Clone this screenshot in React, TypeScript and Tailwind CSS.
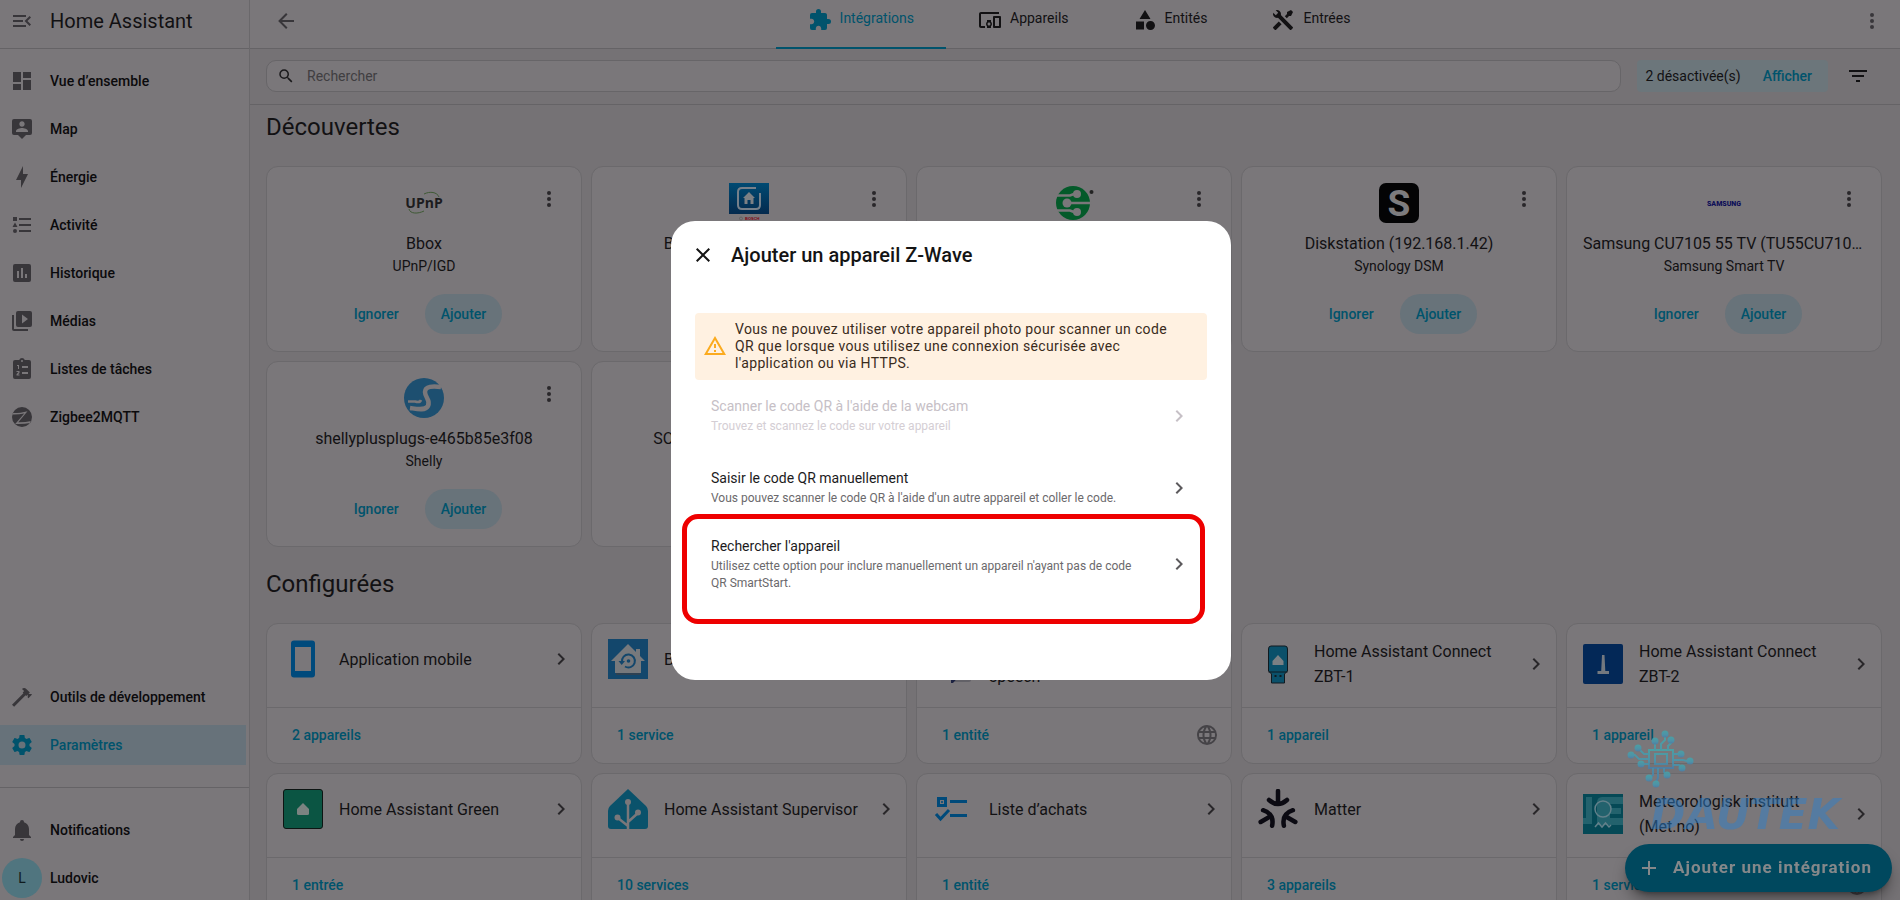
import type { ReactNode } from "react";

const PATHS = {
  menuOpen:
    "M21,15.61L19.59,17L14.58,12L19.59,7L21,8.39L17.44,12L21,15.61M3,6H16V8H3V6M3,13V11H13V13H3M3,18V16H16V18H3Z",
  dashboard: "M13,3V9H21V3M13,21H21V11H13M3,21H11V15H3M3,13H11V3H3V13Z",
  map: "M20,2H4A2,2 0 0,0 2,4V16A2,2 0 0,0 4,18H8L12,22L16,18H20A2,2 0 0,0 22,16V4A2,2 0 0,0 20,2M12,4.3C13.5,4.3 14.7,5.5 14.7,7C14.7,8.5 13.5,9.7 12,9.7C10.5,9.7 9.3,8.5 9.3,7C9.3,5.5 10.5,4.3 12,4.3M18,15H6V14.1C6,12.1 10,11 12,11C14,11 18,12.1 18,14.1V15Z",
  bolt: "M11 15H6L13 1V9H18L11 23V15Z",
  activity:
    "M5,9.5L7.5,14H2.5L5,9.5M3,4H7V8H3V4M5,20A2,2 0 0,0 7,18A2,2 0 0,0 5,16A2,2 0 0,0 3,18A2,2 0 0,0 5,20M9,5V7H21V5H9M9,19H21V17H9V19M9,13H21V11H9V13Z",
  history:
    "M9 17H7V10H9V17M13 17H11V7H13V17M17 17H15V13H17V17M19 3H5A2 2 0 0 0 3 5V19A2 2 0 0 0 5 21H19A2 2 0 0 0 21 19V5A2 2 0 0 0 19 3Z",
  media:
    "M4,6H2V20A2,2 0 0,0 4,22H18V20H4V6M20,2H8A2,2 0 0,0 6,4V16A2,2 0 0,0 8,18H20A2,2 0 0,0 22,16V4A2,2 0 0,0 20,2M12,14.5V5.5L18,10L12,14.5Z",
  todo: "M19 3H14.8A3 3 0 0 0 9.2 3H5A2 2 0 0 0 3 5V20A2 2 0 0 0 5 22H19A2 2 0 0 0 21 20V5A2 2 0 0 0 19 3M12 3A1 1 0 1 1 12 5A1 1 0 1 1 12 3M7 8H9V12H8V9H7V8M6.5 14H9.5V16L8 17.5H9.5V18.5H6.5V17.2L8.3 15.2V15H6.5V14M12 9H18V11H12V9M12 15H18V17H12V15Z",
  zigbee:
    "M12 2A10 10 0 1 0 12 22A10 10 0 1 0 12 2M3.200 8C8 8 13 7.500 17.500 6.200L8.300 17.300C12.500 17.400 17 17 21.300 16L20.300 18C15.500 19 10.500 19.300 5.200 19L14.300 8.600C10.500 9.300 6.500 9.600 2.600 9.500Z",
  hammer:
    "M2,19.63L13.43,8.2L12.72,7.5L14.14,6.07L12,3.89C13.2,2.7 15.09,2.7 16.27,3.89L19.87,7.5L18.45,8.91H21.29L22,9.62L18.45,13.21L17.74,12.5V9.62L16.27,11.04L15.56,10.33L4.13,21.76L2,19.63Z",
  cog: "M12,15.5A3.5,3.5 0 0,1 8.5,12A3.5,3.5 0 0,1 12,8.5A3.5,3.5 0 0,1 15.5,12A3.5,3.5 0 0,1 12,15.5M19.43,12.97C19.47,12.65 19.5,12.33 19.5,12C19.5,11.67 19.47,11.34 19.43,11L21.54,9.37C21.73,9.22 21.78,8.95 21.66,8.73L19.66,5.27C19.54,5.05 19.27,4.96 19.05,5.05L16.56,6.05C16.04,5.66 15.5,5.32 14.87,5.07L14.5,2.42C14.46,2.18 14.25,2 14,2H10C9.75,2 9.54,2.18 9.5,2.42L9.13,5.07C8.5,5.32 7.96,5.66 7.44,6.05L4.95,5.05C4.73,4.96 4.46,5.05 4.34,5.27L2.34,8.73C2.21,8.95 2.27,9.22 2.46,9.37L4.57,11C4.53,11.34 4.5,11.67 4.5,12C4.5,12.33 4.53,12.65 4.57,12.97L2.46,14.63C2.27,14.78 2.21,15.05 2.34,15.27L4.34,18.73C4.46,18.95 4.73,19.03 4.95,18.95L7.44,17.94C7.96,18.34 8.5,18.68 9.13,18.93L9.5,21.58C9.54,21.82 9.75,22 10,22H14C14.25,22 14.46,21.82 14.5,21.58L14.87,18.93C15.5,18.67 16.04,18.34 16.56,17.94L19.05,18.95C19.27,19.03 19.54,18.95 19.66,18.73L21.66,15.27C21.78,15.05 21.73,14.78 21.54,14.63L19.43,12.97Z",
  bell: "M21,19V20H3V19L5,17V11C5,7.9 7.03,5.17 10,4.29C10,4.19 10,4.1 10,4A2,2 0 0,1 12,2A2,2 0 0,1 14,4C14,4.1 14,4.19 14,4.29C16.97,5.17 19,7.9 19,11V17L21,19M14,21A2,2 0 0,1 12,23A2,2 0 0,1 10,21",
  puzzle:
    "M20.5,11H19V7C19,5.89 18.1,5 17,5H13V3.5A2.5,2.5 0 0,0 10.5,1A2.5,2.5 0 0,0 8,3.5V5H4A2,2 0 0,0 2,7V10.8H3.5C5,10.8 6.2,12 6.2,13.5C6.2,15 5,16.2 3.5,16.2H2V20A2,2 0 0,0 4,22H7.8V20.5C7.8,19 9,17.8 10.5,17.8C12,17.8 13.2,19 13.2,20.5V22H17A2,2 0 0,0 19,20V16H20.5A2.5,2.5 0 0,0 23,13.5A2.5,2.5 0 0,0 20.5,11Z",
  devices:
    "M3 6H21V4H3C1.9 4 1 4.9 1 6V18C1 19.1 1.9 20 3 20H7V18H3V6M13 12H9V13.78C8.39 14.33 8 15.11 8 16C8 16.89 8.39 17.67 9 18.22V20H13V18.22C13.61 17.67 14 16.88 14 16S13.61 14.33 13 13.78V12M11 17.5C10.17 17.5 9.5 16.83 9.5 16S10.17 14.5 11 14.5 12.5 15.17 12.5 16 11.83 17.5 11 17.5M22 8H16C15.5 8 15 8.5 15 9V19C15 19.5 15.5 20 16 20H22C22.5 20 23 19.5 23 19V9C23 8.5 22.5 8 22 8M21 18H17V10H21V18Z",
  shape:
    "M11,13.5V21.5H3V13.5H11M12,2L17.5,11H6.5L12,2M17.5,13C20,13 22,15 22,17.5C22,20 20,22 17.5,22C15,22 13,20 13,17.5C13,15 15,13 17.5,13Z",
  tools:
    "M21.71 20.29L20.29 21.71A1 1 0 0 1 18.88 21.71L7 9.85A3.81 3.81 0 0 1 6 10A4 4 0 0 1 2.22 4.7L4.76 7.24L5.29 6.71L6.71 5.29L7.24 4.76L4.7 2.22A4 4 0 0 1 10 6A3.81 3.81 0 0 1 9.85 7L21.71 18.88A1 1 0 0 1 21.71 20.29M2.29 18.88A1 1 0 0 0 2.29 20.29L3.71 21.71A1 1 0 0 0 5.12 21.71L10.59 16.25L7.76 13.42M20 2L16 4V6L13.83 8.17L15.83 10.17L18 8H20L22 4Z",
  chevron: "M8.59,16.58L13.17,12L8.59,7.41L10,6L16,12L10,18L8.59,16.58Z",
  dots: "M12,16A2,2 0 0,1 14,18A2,2 0 0,1 12,20A2,2 0 0,1 10,18A2,2 0 0,1 12,16M12,10A2,2 0 0,1 14,12A2,2 0 0,1 12,14A2,2 0 0,1 10,12A2,2 0 0,1 12,10M12,4A2,2 0 0,1 14,6A2,2 0 0,1 12,8A2,2 0 0,1 10,6A2,2 0 0,1 12,4Z",
  back: "M20,11V13H8L13.5,18.5L12.08,19.92L4.16,12L12.08,4.08L13.5,5.5L8,11H20Z",
  search:
    "M9.5,3A6.5,6.5 0 0,1 16,9.5C16,11.11 15.41,12.59 14.44,13.73L14.71,14H15.5L20.5,19L19,20.5L14,15.5V14.71L13.73,14.44C12.59,15.41 11.11,16 9.5,16A6.5,6.5 0 0,1 3,9.5A6.5,6.5 0 0,1 9.5,3M9.5,5C7,5 5,7 5,9.5C5,12 7,14 9.5,14C12,14 14,12 14,9.5C14,7 12,5 9.5,5Z",
  filter: "M6,13H18V11H6M3,6V8H21V6M10,18H14V16H10V18Z",
  close:
    "M19,6.41L17.59,5L12,10.59L6.41,5L5,6.41L10.59,12L5,17.59L6.41,19L12,13.41L17.59,19L19,17.59L13.41,12L19,6.41Z",
  alert: "M12,2L1,21H23M12,6L19.53,19H4.47M11,10V14H13V10M11,16V18H13V16",
  web: "M16.36,14C16.44,13.34 16.5,12.68 16.5,12C16.5,11.32 16.44,10.66 16.36,10H19.74C19.9,10.64 20,11.31 20,12C20,12.69 19.9,13.36 19.74,14M14.59,19.56C15.19,18.45 15.65,17.25 15.97,16H18.92C17.96,17.65 16.43,18.93 14.59,19.56M14.34,14H9.66C9.56,13.34 9.5,12.68 9.5,12C9.5,11.32 9.56,10.65 9.66,10H14.34C14.43,10.65 14.5,11.32 14.5,12C14.5,12.68 14.43,13.34 14.34,14M12,19.96C11.17,18.76 10.5,17.43 10.09,16H13.91C13.5,17.43 12.83,18.76 12,19.96M8,8H5.08C6.03,6.34 7.57,5.06 9.4,4.44C8.8,5.55 8.35,6.75 8,8M5.08,16H8C8.35,17.25 8.8,18.45 9.4,19.56C7.57,18.93 6.03,17.65 5.08,16M4.26,14C4.1,13.36 4,12.69 4,12C4,11.31 4.1,10.64 4.26,10H7.64C7.56,10.66 7.5,11.32 7.5,12C7.5,12.68 7.56,13.34 7.64,14M12,4.03C12.83,5.23 13.5,6.57 13.91,8H10.09C10.5,6.57 11.17,5.23 12,4.03M18.92,8H15.97C15.65,6.75 15.19,5.55 14.59,4.44C16.43,5.07 17.96,6.34 18.92,8M12,2C6.47,2 2,6.5 2,12A10,10 0 0,0 12,22A10,10 0 0,0 22,12A10,10 0 0,0 12,2Z",
  plus: "M19,13H13V19H11V13H5V11H11V5H13V11H19V13Z",
} as const;

type IconName = keyof typeof PATHS;

function Icon({ name, className = "size-6" }: { name: IconName; className?: string }) {
  return (
    <svg viewBox="0 0 24 24" fill="currentColor" fillRule="evenodd" aria-hidden="true" className={`shrink-0 ${className}`}>
      <path d={PATHS[name]} />
    </svg>
  );
}

function Logo({ children }: { children: ReactNode }) {
  return (
    <svg viewBox="0 0 40 40" aria-hidden="true" className="size-10 shrink-0">
      {children}
    </svg>
  );
}

const upnp = (
  <Logo>
    <path d="M20 11C26 8 33 9 35 14M5 26C6 31 14 31 20 28" fill="none" stroke="#3f5a35" strokeWidth="1" />
    <text x="20" y="25" textAnchor="middle" fontFamily="Open Sans" fontWeight="700" fontSize="14" fill="#1c1c1e">
      UPnP
    </text>
  </Logo>
);

const bosch = (
  <Logo>
    <defs>
      <linearGradient id="bosch" x1="0" y1="0" x2="0" y2="1">
        <stop offset="0" stopColor="#004a72" />
        <stop offset="1" stopColor="#042a4e" />
      </linearGradient>
    </defs>
    <rect width="40" height="31" fill="url(#bosch)" />
    <path d="M27 5H13Q9 5 9 9V22Q9 26 13 26H27Q31 26 31 22V10" fill="none" stroke="#76808a" strokeWidth="2" />
    <path d="M20 9L26 15H24.500V21H21.500V17H18.500V21H15.500V15H14Z" fill="#7d8084" />
    <circle cx="12" cy="35.500" r="1.500" fill="none" stroke="#555" strokeWidth="0.600" />
    <text x="16" y="37" fontFamily="Liberation Sans" fontWeight="700" fontSize="4" fill="#7d0011">
      BOSCH
    </text>
  </Logo>
);

const circuit = (
  <Logo>
    <circle cx="19" cy="20" r="17" fill="#045a2a" />
    <g fill="none" stroke="#7a777a" strokeWidth="2.500">
      <path d="M3 12.500H16L20 11M14 20H38M3 27.500H16L20 29" />
    </g>
    <g fill="#7a777a">
      <circle cx="23" cy="11" r="4" />
      <circle cx="13" cy="20" r="4.500" />
      <circle cx="23" cy="29" r="4" />
    </g>
    <circle cx="37.500" cy="9" r="2" fill="#232323" />
  </Logo>
);

const synology = (
  <Logo>
    <rect width="40" height="40" rx="7" fill="#040405" />
    <text x="20" y="33" textAnchor="middle" fontFamily="Roboto" fontWeight="700" fontSize="37" fill="#7d7c7e">
      S
    </text>
  </Logo>
);

const samsung = (
  <Logo>
    <text x="20" y="22.500" textAnchor="middle" fontFamily="Roboto" fontWeight="900" fontSize="7" fill="#0e0f58">
      SAMSUNG
    </text>
  </Logo>
);

const shelly = (
  <Logo>
    <circle cx="20" cy="20" r="20" fill="#1d4f70" />
    <path
      d="M37 9C29 8 21 8 21 14C21 20 27 22 24 28C21 33 13 31 6 30"
      fill="none"
      stroke="#7a777a"
      strokeWidth="4.500"
    />
    <path d="M4 23.500H11Q16 25 17 22" fill="none" stroke="#7a777a" strokeWidth="2.500" />
  </Logo>
);

const phone = (
  <Logo>
    <path
      fillRule="evenodd"
      fill="#004a7c"
      d="M11 1.500H29Q32 1.500 32 4.500V35.500Q32 38.500 29 38.500H11Q8 38.500 8 35.500V4.500Q8 1.500 11 1.500ZM12 8V32H28V8Z"
    />
  </Logo>
);

const backup = (
  <Logo>
    <rect width="40" height="40" fill="#13476c" />
    <path d="M20 5L28 13V10H32V17L37 22H33V34H7V22H3Z" fill="#77797c" />
    <path d="M8 35H32" stroke="#4b3d38" strokeWidth="1" />
    <path d="M14 23A6.500 6.500 0 1 1 17 27.500" fill="none" stroke="#13476c" strokeWidth="2" />
    <path d="M10.500 22H17L13.700 26Z" fill="#13476c" />
    <circle cx="20.500" cy="22" r="1.800" fill="#13476c" />
  </Logo>
);

const translate = (
  <Logo>
    <rect x="2" y="2" width="26" height="28" rx="2" fill="#1c3d70" />
    <path d="M12 10H36Q38 10 38 12V36Q38 38 36 38H20Z" fill="#626167" />
    <path d="M18 30H28L20 39H18Z" fill="#1d2342" />
  </Logo>
);

const zbt1 = (
  <Logo>
    <path d="M13 2H27Q29.500 2 29.500 5V27L26.500 30V39H13.500V30L10.500 27V5Q10.500 2 13 2Z" fill="#0a506a" stroke="#101a20" />
    <path d="M10.500 28H29.500" stroke="#101a20" />
    <path d="M20 11L25.500 17V21H14.500V17Z" fill="#7a8084" />
    <path d="M16.500 31H18.500V33H16.500ZM21.500 31H23.500V33H21.500Z" fill="#101a20" />
  </Logo>
);

const zbt2 = (
  <Logo>
    <rect width="40" height="40" rx="2" fill="#032857" />
    <path d="M19 11H21.500L22.300 27H26V30H14.500V27H18.200Z" fill="#74797f" />
  </Logo>
);

const haGreen = (
  <Logo>
    <rect x="0.500" y="0.500" width="39" height="39" rx="2.500" fill="#0b5543" stroke="#0d1513" />
    <path d="M20 14L26 20V24.500Q26 26 24.500 26H15.500Q14 26 14 24.500V20Z" fill="#7b8381" />
  </Logo>
);

const supervisor = (
  <Logo>
    <path d="M20 0L38 17Q40 19 40 22V37Q40 40 37 40H3Q0 40 0 37V22Q0 19 2 17Z" fill="#0a526b" />
    <path d="M20 40V14M20 37L10 29M20 33L30 24" stroke="#7a777a" strokeWidth="2.500" fill="none" />
    <g fill="#7a777a">
      <circle cx="20" cy="13" r="3" />
      <circle cx="9.500" cy="28.500" r="3" />
      <circle cx="30" cy="23.500" r="3" />
    </g>
  </Logo>
);

const shopping = (
  <Logo>
    <g fill="none" stroke="#004a7a" strokeWidth="3">
      <path d="M5.500 9.500H12.500V16.500H5.500ZM17 12.500H34M17 26.500H34M3 25L7.500 30L16 21" />
    </g>
    <circle cx="9" cy="13" r="1" fill="#004a7a" />
  </Logo>
);

const matter = (
  <Logo>
    <g fill="none" stroke="#0b0a12" strokeWidth="4.500" strokeLinecap="round">
      <path d="M20 2V15M11 11Q20 19 29 11" />
      <g transform="rotate(120 20 23)">
        <path d="M20 3V15M11 11Q20 19 29 11" />
      </g>
      <g transform="rotate(240 20 23)">
        <path d="M20 3V15M11 11Q20 19 29 11" />
      </g>
    </g>
  </Logo>
);

const metno = (
  <Logo>
    <rect width="40" height="40" fill="#054956" />
    <path d="M3 3H9V30H0V24H3ZM19 3H40V10H27V14H38V20H27V24H40V31H14V9Q14 3 19 3Z" fill="#7fb0b4" opacity="0.250" />
    <circle cx="20" cy="15" r="8" fill="none" stroke="#62808a" strokeWidth="1.500" />
    <path d="M12 33L15.500 29L19 33L22.500 29L26 33L28 31" fill="none" stroke="#62808a" strokeWidth="1.500" />
  </Logo>
);

const NAV: { icon: IconName; label: string }[] = [
  { icon: "dashboard", label: "Vue d’ensemble" },
  { icon: "map", label: "Map" },
  { icon: "bolt", label: "Énergie" },
  { icon: "activity", label: "Activité" },
  { icon: "history", label: "Historique" },
  { icon: "media", label: "Médias" },
  { icon: "todo", label: "Listes de tâches" },
  { icon: "zigbee", label: "Zigbee2MQTT" },
];

const TABS: { icon: IconName; label: string }[] = [
  { icon: "puzzle", label: "Intégrations" },
  { icon: "devices", label: "Appareils" },
  { icon: "shape", label: "Entités" },
  { icon: "tools", label: "Entrées" },
];

const DISCOVERED = [
  { name: "Bbox", domain: "UPnP/IGD", logo: upnp },
  { name: "Bosch SHC (64-da-a0-8)", domain: "Bosch SHC", logo: bosch },
  { name: "Passerelle", domain: "Réseau", logo: circuit },
  { name: "Diskstation (192.168.1.42)", domain: "Synology DSM", logo: synology },
  { name: "Samsung CU7105 55 TV (TU55CU7105KXXC)", domain: "Samsung Smart TV", logo: samsung },
  { name: "shellyplusplugs-e465b85e3f08", domain: "Shelly", logo: shelly },
  { name: "SOUNDBAR (192.168.1.51)", domain: "DLNA", logo: null },
];

const CONFIGURED = [
  { name: "Application mobile", count: "2 appareils", logo: phone },
  { name: "Backup", count: "1 service", logo: backup },
  { name: "Google Translate text-to-speech", count: "1 entité", logo: translate, cloud: true },
  { name: "Home Assistant Connect ZBT-1", count: "1 appareil", logo: zbt1 },
  { name: "Home Assistant Connect ZBT-2", count: "1 appareil", logo: zbt2 },
  { name: "Home Assistant Green", count: "1 entrée", logo: haGreen },
  { name: "Home Assistant Supervisor", count: "10 services", logo: supervisor },
  { name: "Liste d’achats", count: "1 entité", logo: shopping },
  { name: "Matter", count: "3 appareils", logo: matter },
  { name: "Meteorologisk institutt (Met.no)", count: "1 service", logo: metno, cloud: true },
];

const OPTIONS = [
  {
    title: "Scanner le code QR à l'aide de la webcam",
    text: "Trouvez et scannez le code sur votre appareil",
    disabled: true,
  },
  {
    title: "Saisir le code QR manuellement",
    text: "Vous pouvez scanner le code QR à l'aide d'un autre appareil et coller le code.",
  },
  {
    title: "Rechercher l'appareil",
    text: "Utilisez cette option pour inclure manuellement un appareil n'ayant pas de code QR SmartStart.",
    highlighted: true,
  },
];

function NavItem({ icon, label, active = false }: { icon: ReactNode; label: string; active?: boolean }) {
  return (
    <a
      href="#"
      aria-current={active ? "page" : undefined}
      className={`my-1 mr-[3px] flex h-10 items-center gap-2 pl-0.5 text-sm font-medium ${
        active ? "bg-[#67727a] text-[#00536c]" : "text-[#0b0a0c]"
      }`}
    >
      <span className={`flex w-10 justify-center ${active ? "" : "text-[#38363a]"}`}>{icon}</span>
      {label}
    </a>
  );
}

function Sidebar() {
  return (
    <aside className="flex w-[250px] shrink-0 flex-col border-r border-[#6a686b] bg-[#7a777a]">
      <div className="flex h-[49px] shrink-0 items-center gap-2 border-b border-[#656366] pb-1.5 pl-0.5">
        <button type="button" aria-label="Réduire le menu" className="flex w-10 justify-center text-[#38363a]">
          <Icon name="menuOpen" />
        </button>
        <span className="text-xl text-[#121113]">Home Assistant</span>
      </div>
      <nav className="flex grow flex-col pt-2">
        {NAV.map((item) => (
          <NavItem key={item.label} icon={<Icon name={item.icon} />} label={item.label} />
        ))}
        <div className="-mb-0.5 mt-auto flex flex-col">
          <NavItem icon={<Icon name="hammer" />} label="Outils de développement" />
          <NavItem icon={<Icon name="cog" />} label="Paramètres" active />
          <hr className="my-[18px] border-[#656366]" />
          <NavItem icon={<Icon name="bell" />} label="Notifications" />
          <NavItem
            icon={
              <span className="flex size-10 items-center justify-center rounded-full bg-[#50757f] font-normal text-[#0f1a1e]">
                L
              </span>
            }
            label="Ludovic"
          />
        </div>
      </nav>
    </aside>
  );
}

function Toolbar() {
  return (
    <header className="shrink-0">
      <div className="flex h-[49px] border-b border-[#656366] bg-[#7a777a]">
        <button type="button" aria-label="Retour" className="pb-1.5 pl-6 text-[#38363a]">
          <Icon name="back" />
        </button>
        <div role="tablist" className="flex grow justify-center">
          {TABS.map((tab, i) => (
            <button
              key={tab.label}
              type="button"
              role="tab"
              aria-selected={i === 0}
              className={`-mb-px flex items-center gap-2 border-b-2 px-8 pb-2 text-sm ${
                i === 0 ? "border-[#00536c] text-[#00536c]" : "border-transparent text-[#121113]"
              }`}
            >
              <Icon name={tab.icon} />
              <span className="pb-1">{tab.label}</span>
            </button>
          ))}
        </div>
        <button type="button" aria-label="Menu" className="pb-1.5 pr-4 text-[#38363a]">
          <Icon name="dots" />
        </button>
      </div>
      <div className="flex h-14 items-center gap-4 border-b border-[#656366] pb-0.5 pl-4 pr-[30px]">
        <label className="flex h-8 grow items-center gap-3 rounded-[10px] border border-[#676568] bg-[#7a777a] pl-2.5">
          <Icon name="search" className="size-[18px] text-[#1a191b]" />
          <input
            type="search"
            placeholder="Rechercher"
            aria-label="Rechercher"
            className="w-full bg-transparent text-sm outline-none placeholder:text-[#403e41]"
          />
        </label>
        <div className="flex h-8 items-center gap-[22px] rounded-sm bg-[#6c767b] pl-2 pr-4 text-sm text-[#121113]">
          2 désactivée(s)
          <button type="button" className="font-medium text-[#00536c]">
            Afficher
          </button>
        </div>
        <button type="button" aria-label="Filtrer" className="pl-0.5 text-[#121113]">
          <Icon name="filter" />
        </button>
      </div>
    </header>
  );
}

function DiscoveredCard({ name, domain, logo }: (typeof DISCOVERED)[number]) {
  return (
    <article className="relative flex h-[186px] min-w-0 flex-col items-center rounded-xl border border-[#6b696c] bg-[#7a777a] px-4 pt-4 text-[#121113]">
      <button type="button" aria-label="Plus d'options" className="absolute right-5 top-5 text-[#29272a]">
        <Icon name="dots" />
      </button>
      <div className="h-10">{logo}</div>
      <h3 className="mt-[9px] w-full truncate text-center text-base leading-6">{name}</h3>
      <p className="text-sm leading-5">{domain}</p>
      <div className="mt-[18px] flex gap-2.5 pr-2 text-sm font-medium text-[#00536c]">
        <button type="button" className="h-10 px-4">
          Ignorer
        </button>
        <button type="button" className="h-10 rounded-full bg-[#68737a] px-4">
          Ajouter
        </button>
      </div>
    </article>
  );
}

function ConfiguredCard({ name, count, logo, cloud }: (typeof CONFIGURED)[number]) {
  return (
    <article className="h-[141px] min-w-0 rounded-xl border border-[#6b696c] bg-[#7a777a]">
      <a href="#" className="block h-[84px] border-b border-[#6b696c] pl-4 pr-2 pt-[15px]">
        <div className="flex items-center">
          {logo}
          <h3 className="ml-4 grow text-base leading-[25px] text-[#121113]">{name}</h3>
          <Icon name="chevron" className="size-6 text-[#29272a]" />
        </div>
      </a>
      <div className="flex h-[54px] items-center justify-between pl-[25px] pr-3">
        <a href="#" className="text-sm font-medium text-[#00536c]">
          {count}
        </a>
        {cloud && <Icon name="web" className="size-6 text-[#454347]" />}
      </div>
    </article>
  );
}

function Dialog() {
  return (
    <div className="fixed inset-0 flex items-center justify-center pl-0.5">
      <div role="dialog" aria-modal="true" aria-labelledby="dialog-title" className="w-[560px] rounded-3xl bg-white pb-19">
        <header className="flex h-[68px] items-center gap-4 pl-5">
          <button type="button" aria-label="Fermer" className="text-[#141414]">
            <Icon name="close" />
          </button>
          <h2 id="dialog-title" className="text-xl font-medium text-[#141414]">
            Ajouter un appareil Z-Wave
          </h2>
        </header>
        <div className="px-6 pt-6">
          <div role="alert" className="flex items-center gap-2 rounded-sm bg-[#fff1e1] px-2 py-2">
            <Icon name="alert" className="size-6 text-[#fbab1f]" />
            <p className="pr-4 text-sm leading-[17px] tracking-wide text-[#3a2b1c]">
              Vous ne pouvez utiliser votre appareil photo pour scanner un code QR que lorsque vous utilisez une
              connexion sécurisée avec l'application ou via HTTPS.
            </p>
          </div>
          {OPTIONS.map((option) => (
            <button
              key={option.title}
              type="button"
              disabled={option.disabled}
              className={`relative flex min-h-[72px] w-full items-center justify-between gap-6 px-4 py-[11px] text-left ${
                option.disabled ? "text-[#c6c0c6]" : "text-[#1c1b1d]"
              }`}
            >
              <span className="pb-px">
                <span className="block text-sm leading-[22px]">{option.title}</span>
                <span
                  className={`block pt-px text-xs leading-[17px] ${option.disabled ? "text-[#d4ced4]" : "text-[#6b696c]"}`}
                >
                  {option.text}
                </span>
              </span>
              <Icon name="chevron" className={option.disabled ? "size-6" : "size-6 text-[#5c5a5d]"} />
              {option.highlighted && (
                <span className="absolute -bottom-5 -left-[13px] -top-2.5 right-0.5 rounded-2xl border-5 border-[#ee0000]" />
              )}
            </button>
          ))}
        </div>
      </div>
    </div>
  );
}

function Watermark() {
  return (
    <div aria-hidden="true" className="pointer-events-none fixed bottom-[62px] right-[60px] flex flex-col items-start">
      <svg viewBox="0 0 68 58" className="-ml-6 h-[58px] w-[68px] opacity-90" fill="none" strokeWidth="2">
        <defs>
          <linearGradient id="chip" x1="0" y1="0" x2="0" y2="1">
            <stop offset="0" stopColor="#48a3a8" />
            <stop offset="0.600" stopColor="#4a95ac" />
            <stop offset="1" stopColor="#4b7fa8" />
          </linearGradient>
        </defs>
        <g stroke="url(#chip)">
          <path d="M22 20H46V38H22ZM28 24H40V34H28Z" />
          <path d="M28 20V12M34 20V14L38 10V5M41 20V16L44 13V11M22 24H17L12 19M22 29H12L8 25H5M22 34H14M46 24H53M46 30H56L60 31M46 35H52L54 37M26 38V45L23 48M31 38V48L29 52M37 38V42L40 45" />
        </g>
        <g fill="url(#chip)">
          <circle cx="28" cy="11" r="3.500" />
          <circle cx="38" cy="4" r="3.500" />
          <circle cx="44" cy="10" r="3.500" />
          <circle cx="11" cy="18" r="3.500" />
          <circle cx="4" cy="25" r="3.500" />
          <circle cx="14" cy="34" r="3.500" />
          <circle cx="54" cy="24" r="3.500" />
          <circle cx="63" cy="31" r="3.500" />
          <circle cx="55" cy="38" r="3.500" />
          <circle cx="22" cy="48" r="3.500" />
          <circle cx="29" cy="54" r="3.500" />
          <circle cx="40" cy="45" r="3.500" />
        </g>
      </svg>
      <span className="mt-1 font-['DejaVu_Sans'] text-[42px] font-bold italic leading-[46px] text-[#2f80c8]/50">
        DAUTEK
      </span>
    </div>
  );
}

export default function App() {
  return (
    <div className="flex h-screen overflow-hidden bg-[#757275] font-[Roboto,sans-serif]">
      <Sidebar />
      <div className="flex min-w-0 grow flex-col">
        <Toolbar />
        <main className="grow overflow-hidden pl-4 pr-[18px]">
          <h2 className="mb-[23px] mt-1.5 text-2xl leading-8 text-[#121113]">Découvertes</h2>
          <div className="grid grid-cols-5 gap-[9px]">
            {DISCOVERED.map((entry) => (
              <DiscoveredCard key={entry.name} {...entry} />
            ))}
          </div>
          <h2 className="mb-[23px] mt-[21px] text-2xl leading-8 text-[#121113]">Configurées</h2>
          <div className="grid grid-cols-5 gap-[9px]">
            {CONFIGURED.map((entry) => (
              <ConfiguredCard key={entry.name} {...entry} />
            ))}
          </div>
        </main>
      </div>
      <Watermark />
      <button
        type="button"
        className="fixed bottom-2 right-2 flex h-12 items-center gap-3 rounded-full bg-[#00485e] pl-3 pr-5 text-[17px] font-bold tracking-[1px] text-[#85888a] shadow-lg shadow-black/40"
      >
        <Icon name="plus" />
        Ajouter une intégration
      </button>
      <Dialog />
    </div>
  );
}
